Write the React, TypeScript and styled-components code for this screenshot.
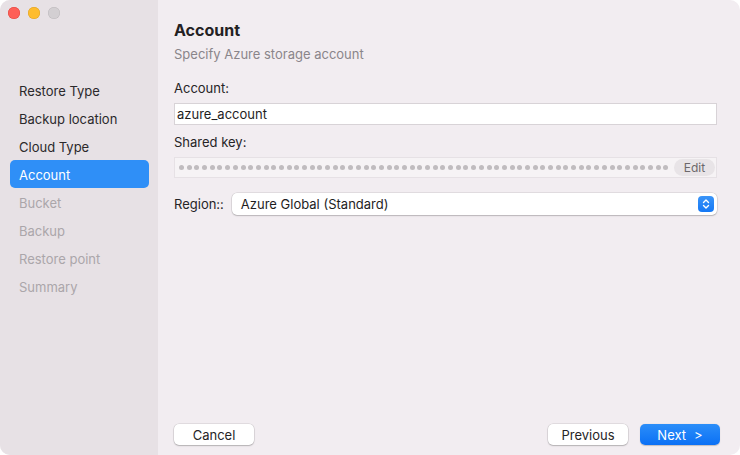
import React from "react";
import styled, { createGlobalStyle } from "styled-components";

const Global = createGlobalStyle`
  html, body { margin: 0; padding: 0; background: #ffffff; }
  body { font-family: Inter, "Liberation Sans", Arial, sans-serif; -webkit-font-smoothing: antialiased; }
  * { box-sizing: border-box; }
`;

const Window = styled.div`
  width: 740px;
  height: 455px;
  display: flex;
  border-radius: 10px;
  overflow: hidden;
  background: #f2edf1;
  font-size: 13px;
  color: #262426;
`;

const Sidebar = styled.aside`
  width: 158px;
  flex: none;
  background: #e7e1e5;
  display: flex;
  flex-direction: column;
`;

const TitleBar = styled.div`
  display: flex;
  gap: 8px;
  padding: 7px 0 0 8px;
  height: 76px;
`;

const Light = styled.span<{ $c: string; $b: string }>`
  width: 12px;
  height: 12px;
  border-radius: 50%;
  background: ${(p) => p.$c};
  box-shadow: inset 0 0 0 0.5px ${(p) => p.$b};
`;

const Nav = styled.nav`
  display: flex;
  flex-direction: column;
  padding: 0 9px 0 10px;
`;

const NavItem = styled.div<{ $state: "done" | "active" | "todo" }>`
  height: 28px;
  display: flex;
  align-items: center;
  padding: 1px 0 0 9px;
  border-radius: 5px;
  background: ${(p) => (p.$state === "active" ? "#2f8ff7" : "transparent")};
  color: ${(p) =>
    p.$state === "active" ? "#ffffff" : p.$state === "done" ? "#2b292b" : "#aba6aa"};
`;

const Main = styled.main`
  flex: 1;
  min-width: 0;
  display: flex;
  flex-direction: column;
  padding: 20px 20px 10px 16px;
`;

const Title = styled.h1`
  margin: 0;
  font-size: 16px;
  line-height: 20px;
  font-weight: 700;
  color: #232123;
`;

const Subtitle = styled.div`
  margin-top: 6px;
  line-height: 16px;
  color: #8a858a;
`;

const Form = styled.div`
  display: flex;
  flex-direction: column;
  padding-right: 3px;
  margin-top: 18px;
`;

const Label = styled.div<{ $top?: number }>`
  line-height: 16px;
  margin-top: ${(p) => p.$top ?? 0}px;
  margin-bottom: 7px;
  color: #262426;
`;

const TextInput = styled.div`
  height: 22px;
  background: #ffffff;
  border: 1px solid #d8d3d7;
  display: flex;
  align-items: center;
  padding-left: 2px;
  color: #1e1d1e;
  font-size: 13px;
`;

const SecretField = styled.div`
  height: 21px;
  background: #f6f3f5;
  border: 1px solid #e6e1e5;
  display: flex;
  align-items: center;
  padding: 0 1px 0 4px;
  overflow: hidden;
`;

const Dots = styled.div`
  flex: 1;
  min-width: 0;
  display: flex;
  gap: 2.7px;
  overflow: hidden;
`;

const Dot = styled.span`
  flex: none;
  width: 5px;
  height: 5px;
  border-radius: 50%;
  background: #c0bcbf;
`;

const EditButton = styled.div`
  flex: none;
  width: 41px;
  height: 17px;
  border-radius: 9px;
  background: #e8e4e7;
  color: #6c686b;
  font-size: 12px;
  display: flex;
  align-items: center;
  justify-content: center;
`;

const RegionRow = styled.div`
  display: flex;
  align-items: center;
  gap: 8px;
  margin-top: 15px;
`;

const Select = styled.div`
  flex: 1;
  min-width: 0;
  height: 22px;
  background: #ffffff;
  border-radius: 5px;
  box-shadow: 0 0 0 0.5px rgba(0, 0, 0, 0.14), 0 1px 1.5px rgba(0, 0, 0, 0.18);
  display: flex;
  align-items: center;
  justify-content: space-between;
  padding: 0 3px 0 9px;
  color: #1e1d1e;
`;

const Stepper = styled.div`
  width: 16px;
  height: 16px;
  border-radius: 4px;
  background: linear-gradient(#3a94f8, #1578f5);
  display: flex;
  align-items: center;
  justify-content: center;
`;

const Spacer = styled.div`
  flex: 1;
`;

const Footer = styled.div`
  display: flex;
  align-items: center;
  gap: 12px;
`;

const Button = styled.div<{ $primary?: boolean }>`
  width: 80px;
  height: 21px;
  border-radius: 5px;
  display: flex;
  align-items: center;
  justify-content: center;
  gap: 8px;
  font-size: 13px;
  background: ${(p) => (p.$primary ? "linear-gradient(#2b8ef9, #0b70f5)" : "#ffffff")};
  color: ${(p) => (p.$primary ? "#ffffff" : "#262426")};
  box-shadow: ${(p) =>
    p.$primary
      ? "0 0.5px 1px rgba(0,0,0,0.2)"
      : "0 0 0 0.5px rgba(0,0,0,0.14), 0 1px 1.5px rgba(0,0,0,0.2)"};
`;

const steps: { label: string; state: "done" | "active" | "todo" }[] = [
  { label: "Restore Type", state: "done" },
  { label: "Backup location", state: "done" },
  { label: "Cloud Type", state: "done" },
  { label: "Account", state: "active" },
  { label: "Bucket", state: "todo" },
  { label: "Backup", state: "todo" },
  { label: "Restore point", state: "todo" },
  { label: "Summary", state: "todo" },
];

const secretLength = 64;

export default function App() {
  return (
    <>
      <Global />
      <Window>
        <Sidebar>
          <TitleBar>
            <Light $c="#fe5f57" $b="#e0443e" />
            <Light $c="#febc2e" $b="#dea123" />
            <Light $c="#d3cfd2" $b="#bcb8bb" />
          </TitleBar>
          <Nav>
            {steps.map((s) => (
              <NavItem key={s.label} $state={s.state}>
                {s.label}
              </NavItem>
            ))}
          </Nav>
        </Sidebar>
        <Main>
          <Title>Account</Title>
          <Subtitle>Specify Azure storage account</Subtitle>
          <Form>
            <Label>Account:</Label>
            <TextInput>azure_account</TextInput>
            <Label $top={9}>Shared key:</Label>
            <SecretField aria-label="Shared key (hidden)">
              <Dots>
                {Array.from({ length: secretLength }, (_, i) => (
                  <Dot key={i} />
                ))}
              </Dots>
              <EditButton>Edit</EditButton>
            </SecretField>
            <RegionRow>
              <span>Region::</span>
              <Select>
                <span>Azure Global (Standard)</span>
                <Stepper>
                  <svg width="10" height="12" viewBox="0 0 10 12" fill="none">
                    <path d="M2.5 4.5 L5 2 L7.5 4.5" stroke="#fff" strokeWidth="1.4" strokeLinecap="round" strokeLinejoin="round" />
                    <path d="M2.5 7.5 L5 10 L7.5 7.5" stroke="#fff" strokeWidth="1.4" strokeLinecap="round" strokeLinejoin="round" />
                  </svg>
                </Stepper>
              </Select>
            </RegionRow>
          </Form>
          <Spacer />
          <Footer>
            <Button>Cancel</Button>
            <Spacer />
            <Button>Previous</Button>
            <Button $primary>
              <span>Next</span>
              <span>&gt;</span>
            </Button>
          </Footer>
        </Main>
      </Window>
    </>
  );
}
